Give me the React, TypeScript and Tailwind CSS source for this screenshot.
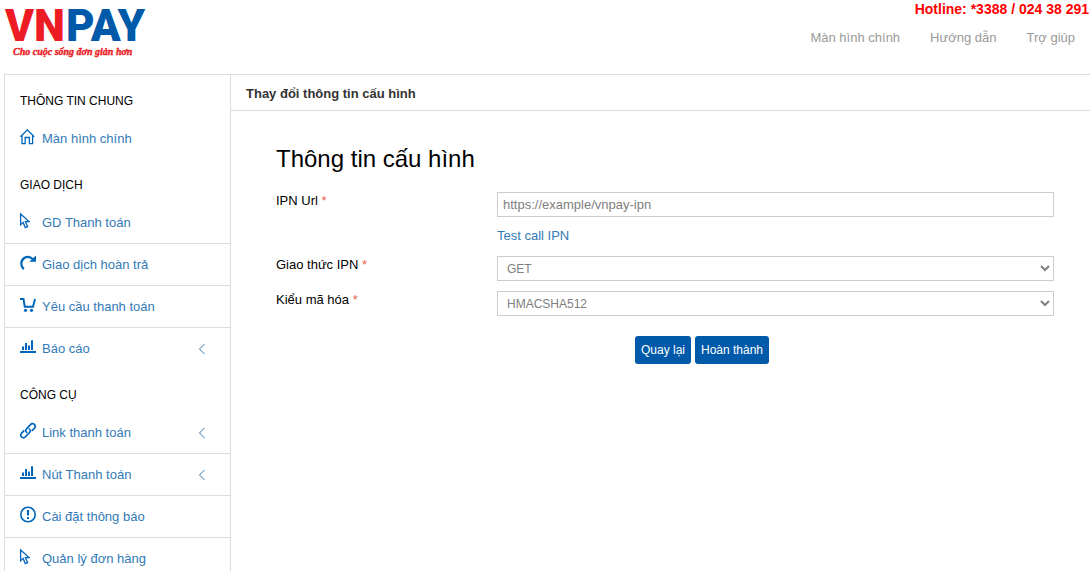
import React from "react";

type IconName = "home" | "cursor" | "refund" | "cart" | "chart" | "link" | "notice";

function Icon({ name }: { name: IconName }) {
  const outline = {
    fill: "none",
    stroke: "currentColor",
    strokeWidth: 1.3,
  } as const;
  return (
    <svg viewBox="0 0 16 16" className="size-4 shrink-0 overflow-visible" aria-hidden="true">
      {name === "home" && (
        <path {...outline} d="M.4 7.700 7.300.9l6.900 6.800M2 6.700v8h3.200V8.500h4.200v6.200h3.200v-8" />
      )}
      {name === "cursor" && (
        <path {...outline} d="M.6 1v10.800l2.500-2.400 2.200 5.200 2.300-1-2.200-5h3.700z" />
      )}
      {name === "refund" && (
        <>
          <path fill="none" stroke="currentColor" strokeWidth="2.200" d="M3.800 14.300C.2 11 .6 5.600 4.200 3 7 1.300 10.500 1.700 13 4.200" />
          <path fill="currentColor" d="M16 .5v6.300H9.300z" />
        </>
      )}
      {name === "cart" && (
        <>
          <path fill="none" stroke="currentColor" strokeWidth="2" d="M0 2h3.500l1.300 7.800h8.200L15 2" />
          <circle cx="5.500" cy="13.300" r="1.600" fill="currentColor" />
          <circle cx="11.500" cy="13.300" r="1.600" fill="currentColor" />
        </>
      )}
      {name === "chart" && (
        <path fill="currentColor" d="M0 12h16v2H0zM2 7.500h2V11H2zM5 4h2v7H5zM8 6.500h2V11H8zM11 1.300h2V11h-2z" />
      )}
      {name === "link" && (
        <g fill="none" stroke="currentColor" strokeWidth="1.700" strokeLinecap="round">
          <path d="M9.400 6c1.300 1.200 1.200 2.400.1 3.500l-4 4.200c-1 1.100-2.800 1.200-3.900.2s-1.100-2.600-.1-3.700l2.300-2.400" />
          <path d="M6.600 9.300C5.300 8.100 5.400 6.900 6.500 5.800l4-4.200c1-1.100 2.800-1.200 3.900-.2s1.100 2.600.1 3.700l-2.300 2.400" />
        </g>
      )}
      {name === "notice" && (
        <>
          <circle cx="8" cy="7.500" r="7.200" fill="none" stroke="currentColor" strokeWidth="1.600" />
          <path fill="currentColor" d="M7 3h2v5.500H7zM7 10h2v2H7z" />
        </>
      )}
    </svg>
  );
}

interface Item {
  label: string;
  icon: IconName;
  expandable?: boolean;
}

const sections: { title: string; items: Item[] }[] = [
  { title: "THÔNG TIN CHUNG", items: [{ label: "Màn hình chính", icon: "home" }] },
  {
    title: "GIAO DỊCH",
    items: [
      { label: "GD Thanh toán", icon: "cursor" },
      { label: "Giao dịch hoàn trả", icon: "refund" },
      { label: "Yêu cầu thanh toán", icon: "cart" },
      { label: "Báo cáo", icon: "chart", expandable: true },
    ],
  },
  {
    title: "CÔNG CỤ",
    items: [
      { label: "Link thanh toán", icon: "link", expandable: true },
      { label: "Nút Thanh toán", icon: "chart", expandable: true },
      { label: "Cài đặt thông báo", icon: "notice" },
      { label: "Quản lý đơn hàng", icon: "cursor" },
    ],
  },
];

function Logo() {
  return (
    <a href="#" aria-label="VNPAY" className="block h-[60px] w-36 shrink-0">
      <svg viewBox="0 0 144 60" className="h-[60px] w-36">
        <g fontFamily="Roboto, sans-serif" fontWeight="900" fontSize="44">
          <text x="1" y="41" fill="#ed1c24">VN</text>
          <text x="62" y="41" fill="#0059a9">PAY</text>
        </g>
        <text x="9" y="55" fill="#ed1c24" stroke="#ed1c24" strokeWidth="0.400" fontFamily="'Liberation Serif', serif" fontSize="10" fontWeight="700" fontStyle="italic">
          Cho cuộc sống đơn giản hơn
        </text>
      </svg>
    </a>
  );
}

function Header() {
  return (
    <header className="flex h-[74px] shrink-0 justify-between pl-1">
      <Logo />
      <div className="flex flex-col items-end">
        <p className="pr-px text-sm leading-[18px] font-bold whitespace-nowrap text-[#ff0000]">
          Hotline: *3388 / 024 38 291
        </p>
        <nav className="mt-2.5 flex gap-[30px] pr-[15px] text-[13px] leading-5 text-[#999999]">
          <a href="#">Màn hình chính</a>
          <a href="#">Hướng dẫn</a>
          <a href="#">Trợ giúp</a>
        </nav>
      </div>
    </header>
  );
}

function Sidebar() {
  return (
    <aside className="w-[227px] shrink-0 border-x border-[#dddddd]">
      {sections.map((section) => (
        <section key={section.title}>
          <h2 className="px-[15px] pt-4 pb-[7px] text-xs leading-5 text-black">{section.title}</h2>
          <ul className="divide-y divide-[#dddddd]">
            {section.items.map((item) => (
              <li key={item.label}>
                <a href="#" className="flex h-[41px] items-center gap-[6px] pr-6 pl-[15px] text-[13px] text-[#337ab7]">
                  <span className="pb-1 text-[#0066bb]">
                    <Icon name={item.icon} />
                  </span>
                  <span className="flex-1">{item.label}</span>
                  {item.expandable && (
                    <svg viewBox="0 0 8 12" className="h-3 w-2" aria-hidden="true">
                      <path d="M6.500 1 1.500 6l5 5" fill="none" stroke="currentColor" strokeWidth="1" />
                    </svg>
                  )}
                </a>
              </li>
            ))}
          </ul>
        </section>
      ))}
    </aside>
  );
}

function FieldLabel({ htmlFor, children }: { htmlFor: string; children: React.ReactNode }) {
  return (
    <label htmlFor={htmlFor} className="text-[13px] leading-[18px] text-black">
      {children} <span className="text-[#e9614f]">*</span>
    </label>
  );
}

function ConfigForm() {
  const select = "h-[25px] w-full border border-[#cccccc] bg-white px-[5px] text-xs text-[#808080]";
  return (
    <form className="pt-8 pr-9 pl-[45px]" onSubmit={(e) => e.preventDefault()}>
      <h1 className="text-2xl leading-8 text-black">Thông tin cấu hình</h1>
      <div className="mt-[17px] grid grid-cols-[221px_1fr] gap-y-2.5">
        <FieldLabel htmlFor="ipn-url">IPN Url</FieldLabel>
        <div>
          <input
            id="ipn-url"
            type="text"
            defaultValue="https://example/vnpay-ipn"
            className="block h-[25px] w-full border border-[#cccccc] px-[5px] text-[13px] text-[#808080]"
          />
          <a href="#" className="mt-[9px] block text-[13px] leading-5 text-[#337ab7]">
            Test call IPN
          </a>
        </div>
        <FieldLabel htmlFor="ipn-method">Giao thức IPN</FieldLabel>
        <select id="ipn-method" className={select} defaultValue="GET">
          <option>GET</option>
          <option>POST</option>
        </select>
        <FieldLabel htmlFor="hash-type">Kiểu mã hóa</FieldLabel>
        <select id="hash-type" className={select} defaultValue="HMACSHA512">
          <option>HMACSHA512</option>
          <option>SHA256</option>
        </select>
      </div>
      <div className="mt-5 flex justify-center gap-1 pl-[74px] text-xs text-white">
        <button type="button" className="h-7 rounded-[3px] bg-[#0059a9] px-1.5">
          Quay lại
        </button>
        <button type="submit" className="h-7 rounded-[3px] bg-[#0059a9] px-1.5">
          Hoàn thành
        </button>
      </div>
    </form>
  );
}

export default function App() {
  return (
    <div className="flex h-screen flex-col overflow-hidden bg-white font-['Liberation_Sans',Arial,sans-serif]">
      <Header />
      <div className="ml-1 flex min-h-0 flex-1 border-t border-[#dddddd]">
        <Sidebar />
        <main className="min-w-0 flex-1">
          <div className="border-b border-[#dddddd] px-[15px] pt-[9px] pb-1.5 text-[13px] leading-5 font-bold text-[#333333]">
            Thay đổi thông tin cấu hình
          </div>
          <ConfigForm />
        </main>
      </div>
    </div>
  );
}
